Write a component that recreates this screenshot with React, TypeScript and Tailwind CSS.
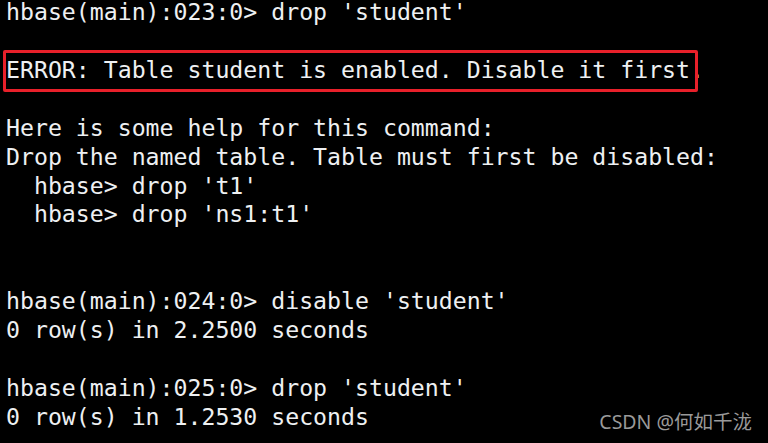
const lines: string[] = [
  "hbase(main):023:0> drop 'student'",
  '',
  'ERROR: Table student is enabled. Disable it first.',
  '',
  'Here is some help for this command:',
  'Drop the named table. Table must first be disabled:',
  "  hbase> drop 't1'",
  "  hbase> drop 'ns1:t1'",
  '',
  '',
  "hbase(main):024:0> disable 'student'",
  '0 row(s) in 2.2500 seconds',
  '',
  "hbase(main):025:0> drop 'student'",
  '0 row(s) in 1.2530 seconds',
];

export default function App() {
  return (
    <div className="relative h-[443px] w-[768px] overflow-hidden bg-black">
      <div
        className="mt-[-2px] pl-[6px] text-[23.2px] leading-[28.93px] text-[#eef0f2]"
        style={{ fontFamily: '"DejaVu Sans Mono", monospace' }}
      >
        {lines.map((line, i) => (
          <div key={i} className="h-[28.93px] whitespace-pre">
            {line}
          </div>
        ))}
      </div>

      {/* red highlight around the error line */}
      <div className="pointer-events-none absolute left-[3px] top-[50px] h-[42px] w-[695px] rounded-[2px] border-[3px] border-[#e8202a]" />

      <div
        className="absolute right-[16px] bottom-[7px] text-[19.5px] text-[#9a9a9a]"
        style={{ fontFamily: '"Noto Sans", "Noto Sans CJK SC", sans-serif' }}
      >
        CSDN @何如千泷
      </div>
    </div>
  );
}
